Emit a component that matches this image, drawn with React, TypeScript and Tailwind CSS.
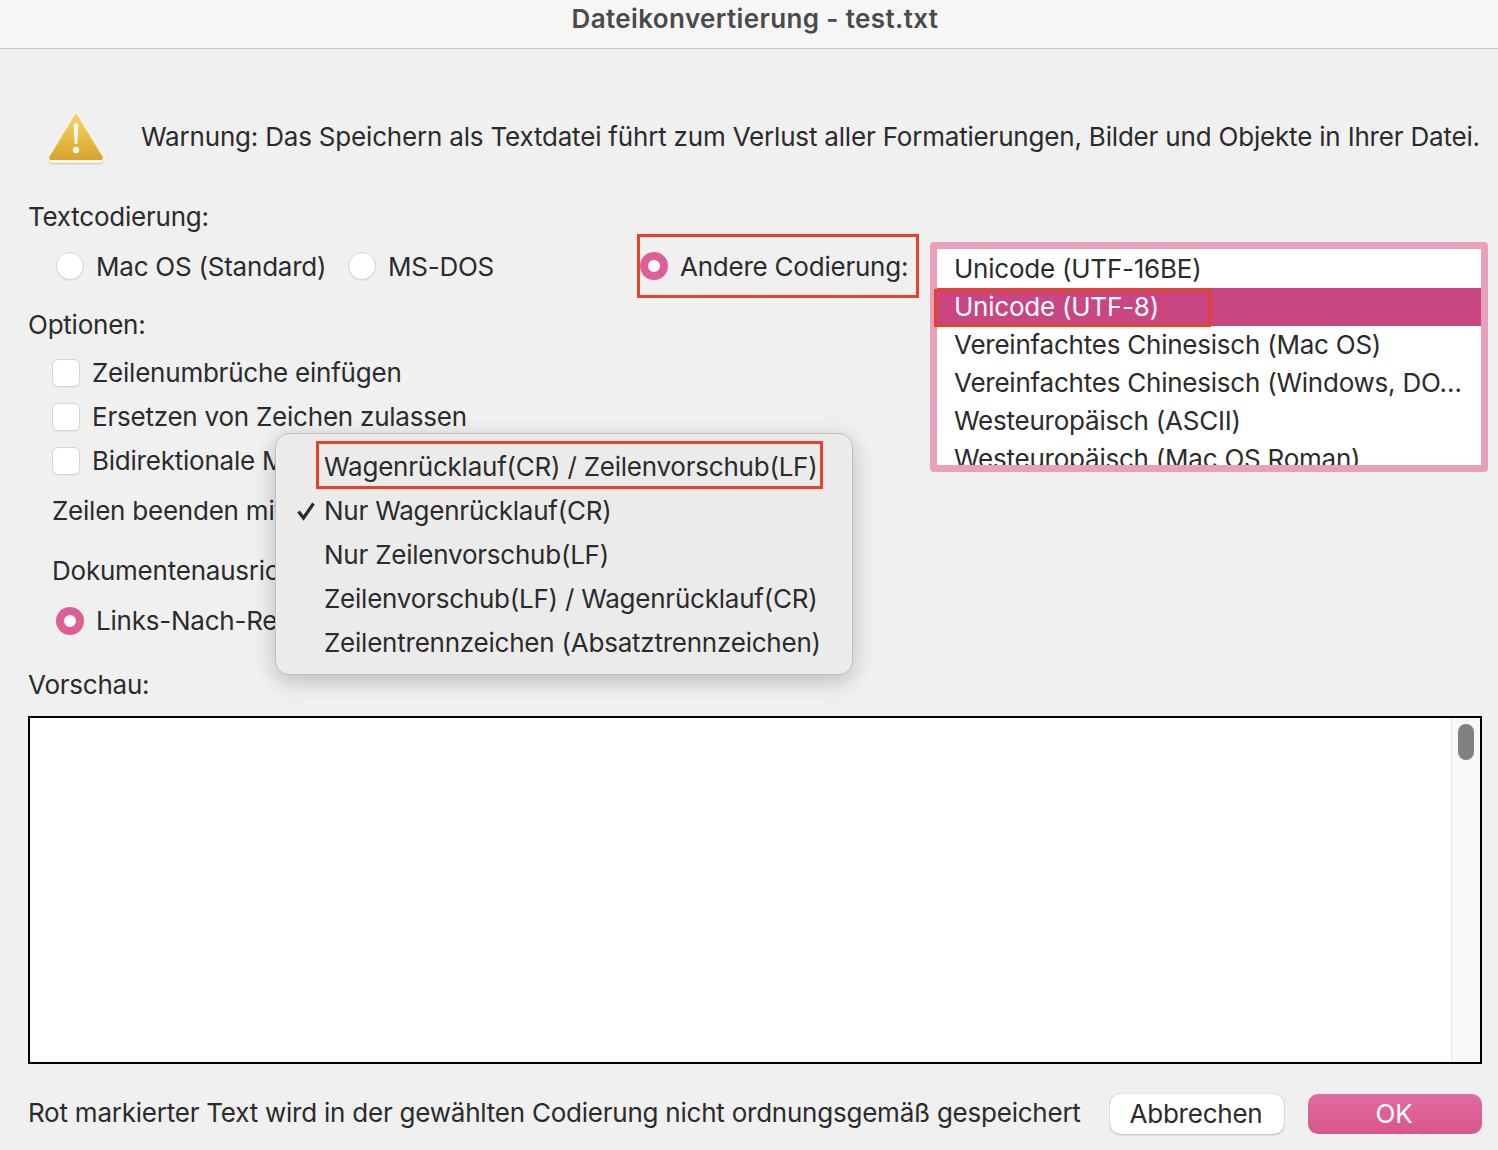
import React from "react";

function Radio({ on = false }: { on?: boolean }) {
  return on ? (
    <span className="flex h-[28px] w-[28px] shrink-0 items-center justify-center rounded-full bg-[#dd5f98]">
      <span className="h-[12px] w-[12px] rounded-full bg-white" />
    </span>
  ) : (
    <span className="h-[28px] w-[28px] shrink-0 rounded-full border border-[#d6d6d6] bg-white shadow-[0_1px_1px_rgba(0,0,0,0.06)]" />
  );
}

function Check({ label }: { label: string }) {
  return (
    <div className="flex h-[44px] items-center gap-[12px] pl-[24px]">
      <span className="h-[28px] w-[28px] shrink-0 rounded-[6px] border border-[#d6d6d6] bg-white shadow-[0_1px_1px_rgba(0,0,0,0.05)]" />
      <span className="whitespace-nowrap pb-[2px]">{label}</span>
    </div>
  );
}

function WarnIcon() {
  return (
    <svg width="60" height="56" viewBox="0 0 60 56" className="shrink-0">
      <defs>
        <linearGradient id="warn" x1="0" y1="0" x2="0" y2="1">
          <stop offset="0" stopColor="#f2d965" />
          <stop offset="1" stopColor="#d9a32c" />
        </linearGradient>
      </defs>
      <path d="M30 2 L58 48 Q59 53 54 53 L6 53 Q1 53 2 48 Z" fill="#f7f5ec" stroke="#f7f5ec" strokeWidth="2" strokeLinejoin="round" />
      <path d="M2 50 Q2 54 6 54 L54 54 Q58 54 58 50 L58 52 Q57 56 53 55.5 L7 55.5 Q3 56 2 52 Z" fill="#cfcfcf" />
      <path d="M30 4 L56.5 47.5 Q58 51 54 51 L6 51 Q2 51 3.5 47.5 Z" fill="url(#warn)" />
      <path d="M27.6 15 Q30 13.5 32.4 15 L31.4 35 L28.6 35 Z" fill="#fbf8ea" />
      <circle cx="30" cy="41" r="3.2" fill="#fbf8ea" />
    </svg>
  );
}

const encodings = [
  "Unicode (UTF-16BE)",
  "Unicode (UTF-8)",
  "Vereinfachtes Chinesisch (Mac OS)",
  "Vereinfachtes Chinesisch (Windows, DO…",
  "Westeuropäisch (ASCII)",
  "Westeuropäisch (Mac OS Roman)",
];

const menu = [
  "Wagenrücklauf(CR) / Zeilenvorschub(LF)",
  "Nur Wagenrücklauf(CR)",
  "Nur Zeilenvorschub(LF)",
  "Zeilenvorschub(LF) / Wagenrücklauf(CR)",
  "Zeilentrennzeichen (Absatztrennzeichen)",
];

export default function App() {
  return (
    <div className="relative flex h-[1150px] w-[1498px] flex-col overflow-hidden bg-[#f0f0f0] font-['Inter',sans-serif] text-[26px] tracking-[-0.23px] text-[#2b2b2b]">
      <div className="flex h-[49px] shrink-0 items-center justify-center border-b border-[#c9c9c9] bg-[#f6f6f6] pb-[11px] pl-[12px] font-semibold tracking-[0.38px] text-[#4a4a4a]">
        Dateikonvertierung - test.txt
      </div>

      <div className="mt-[60px] flex h-[56px] shrink-0 items-center gap-[35px] pl-[46px]">
        <WarnIcon />
        <span className="whitespace-nowrap pb-[1px] tracking-[-0.19px]">
          Warnung: Das Speichern als Textdatei führt zum Verlust aller Formatierungen, Bilder und Objekte in Ihrer Datei.
        </span>
      </div>

      <div className="mt-[32px] flex shrink-0">
        <div className="w-[930px] shrink-0 pl-[28px]">
          <div className="flex h-[37px] items-center pt-[2px]">Textcodierung:</div>
          <div className="flex h-[64px] items-center">
            <div className="flex w-[320px] shrink-0 items-center gap-[12px] pl-[28px]">
              <Radio />
              <span className="whitespace-nowrap">Mac OS (Standard)</span>
            </div>
            <div className="flex w-[289px] shrink-0 items-center gap-[12px]">
              <Radio />
              <span>MS-DOS</span>
            </div>
            <div className="flex h-[64px] w-[282px] shrink-0 items-center gap-[12px] border-[3px] border-[#e5432a]">
              <Radio on />
              <span className="whitespace-nowrap">Andere Codierung:</span>
            </div>
          </div>
          <div className="flex h-[53px] items-center">Optionen:</div>
          <Check label="Zeilenumbrüche einfügen" />
          <Check label="Ersetzen von Zeichen zulassen" />
          <Check label="Bidirektionale Markierungen" />
          <div className="flex h-[56px] items-center pb-[2px] pl-[24px]">Zeilen beenden mit:</div>
          <div className="flex h-[64px] items-center pb-[2px] pl-[24px]">Dokumentenausrichtung:</div>
          <div className="flex h-[36px] items-center gap-[12px] pl-[28px]">
            <Radio on />
            <span className="pb-[2px]">Links-Nach-Rechts</span>
          </div>
        </div>

        <div className="relative mt-[45px] h-[230px] w-[558px] shrink-0 rounded-[4px] border-[7px] border-[#e8a0bc] bg-white">
          <div className="h-full overflow-hidden pt-[1px]">
            {encodings.map((e, i) => (
              <div
                key={e}
                className={
                  i === 1
                    ? "flex h-[38px] items-center whitespace-nowrap bg-[#c94682] pb-[2px] pl-[17px] text-white"
                    : "flex h-[38px] items-center whitespace-nowrap pb-[2px] pl-[17px]"
                }
              >
                {e}
              </div>
            ))}
          </div>
          <div className="absolute left-[-3px] top-[40px] h-[38px] w-[277px] border-[3px] border-[#e5432a]" />
        </div>
      </div>

      <div className="mt-[28px] flex h-[36px] shrink-0 items-center pb-[2px] pl-[28px]">Vorschau:</div>

      <div className="ml-[28px] mr-[16px] mt-[13px] flex h-[348px] shrink-0 border-2 border-black bg-white">
        <div className="flex flex-1 flex-col justify-end overflow-hidden pl-[45px]">
          <div className="h-[2px] overflow-hidden whitespace-nowrap text-[11px] leading-[14px] text-[#555]">Unternehmen</div>
        </div>
        <div className="w-[29px] shrink-0 border-l border-[#e6e6e6] bg-[#f8f8f8] pl-[6px] pt-[6px]">
          <div className="h-[36px] w-[16px] rounded-full bg-[#808080]" />
        </div>
      </div>

      <div className="mt-[30px] flex h-[40px] shrink-0 items-center pl-[28px]">
        <span className="w-[1082px] shrink-0 whitespace-nowrap pb-[3px]">
          Rot markierter Text wird in der gewählten Codierung nicht ordnungsgemäß gespeichert
        </span>
        <button className="h-[40px] w-[174px] shrink-0 rounded-[10px] bg-white pb-[4px] pr-[2px] shadow-[0_0_1px_rgba(0,0,0,0.35),0_1px_2px_rgba(0,0,0,0.2)]">
          Abbrechen
        </button>
        <button className="ml-[24px] h-[40px] w-[174px] shrink-0 rounded-[10px] bg-gradient-to-b from-[#e16c9f] to-[#d9558f] pb-[4px] pr-[2px] text-white">
          OK
        </button>
      </div>

      <div className="absolute left-[275px] top-[433px] h-[242px] w-[578px] rounded-[14px] border border-[#bfbfbf] bg-[#ebebeb] py-[11px] shadow-[0_6px_22px_rgba(0,0,0,0.22)]">
        {menu.map((m, i) => (
          <div key={m} className="relative flex h-[44px] items-center whitespace-nowrap pb-[2px] pl-[48px]">
            {i === 1 && (
              <svg width="20" height="20" viewBox="0 0 20 20" className="absolute left-[20px] top-[12px]">
                <path d="M2.5 10.5 L7.5 17 L17.5 2.5" fill="none" stroke="#2b2b2b" strokeWidth="3.2" />
              </svg>
            )}
            {m}
          </div>
        ))}
        <div className="absolute left-[40px] top-[7px] h-[48px] w-[507px] border-[3px] border-[#e5432a]" />
      </div>
    </div>
  );
}
